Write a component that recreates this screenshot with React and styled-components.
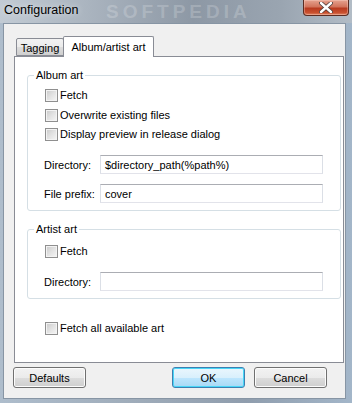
import React from "react";
import styled, { createGlobalStyle } from "styled-components";

const GlobalStyle = createGlobalStyle`
  html, body {
    margin: 0;
    padding: 0;
    background: #ffffff;
  }
  * {
    box-sizing: border-box;
  }
`;

const ui = `"Liberation Sans", Arial, sans-serif`;

const Window = styled.div`
  width: 352px;
  height: 403px;
  display: flex;
  flex-direction: column;
  background: linear-gradient(90deg, #aebdcc 0%, #9eabb9 40%, #8f9dad 70%, #a3b6c9 100%);
  font-family: ${ui};
  font-size: 11px;
  color: #000;
  overflow: hidden;
`;

const TitleBar = styled.div`
  height: 23px;
  flex: none;
  display: flex;
  align-items: flex-start;
  justify-content: space-between;
  position: relative;
  background: linear-gradient(90deg, #c2cbd4 0%, #aab4bf 25%, #8d98a5 55%, #9aa5b1 80%, #b2bcc6 100%);
`;

const Title = styled.span`
  font-size: 12.5px;
  padding: 3px 0 0 4px;
  color: #000;
  text-shadow: 0 0 6px rgba(255, 255, 255, 0.7);
`;

// faint site watermark that sits over the glass title bar
const Watermark = styled.span`
  position: absolute;
  left: 106px;
  top: 2px;
  font-family: ${ui};
  font-weight: bold;
  font-size: 19px;
  line-height: 20px;
  letter-spacing: 4px;
  color: rgba(255, 255, 255, 0.2);
  pointer-events: none;
  white-space: nowrap;
`;

const CloseButton = styled.div`
  width: 46px;
  height: 16px;
  margin-right: 3px;
  border: 1px solid #5b2c22;
  border-top: none;
  border-radius: 0 0 4px 4px;
  background: linear-gradient(180deg, #e5a290 0%, #d2745c 45%, #b83a20 55%, #c9512f 85%, #e08a6c 100%);
  box-shadow: inset 0 0 0 1px rgba(255, 220, 210, 0.35);
  display: flex;
  align-items: center;
  justify-content: center;
`;

const Client = styled.div`
  flex: 1;
  margin: 0 6px 4px 3px;
  background: #f0f0f0;
  border: 1px solid #8795a4;
  display: flex;
  flex-direction: column;
  padding: 12px 1px 0 10px;
`;

const TabStrip = styled.div`
  height: 20px;
  display: flex;
  align-items: flex-end;
  padding-left: 2px;
  position: relative;
  z-index: 1;
`;

const Tab = styled.div`
  height: ${(p) => (p.active ? 21 : 18)}px;
  margin-bottom: ${(p) => (p.active ? -1 : 0)}px;
  margin-left: ${(p) => (p.active ? -1 : 0)}px;
  width: ${(p) => p.w}px;
  border: 1px solid #898c95;
  border-bottom: ${(p) => (p.active ? "none" : "1px solid #898c95")};
  background: ${(p) =>
    p.active ? "#ffffff" : "linear-gradient(180deg, #f2f2f2 0%, #ebebeb 50%, #dddddd 51%, #cfcfcf 100%)"};
  border-radius: 2px 2px 0 0;
  display: flex;
  align-items: center;
  justify-content: center;
  padding-top: ${(p) => (p.active ? 0 : 1)}px;
`;

const Panel = styled.div`
  height: 307px;
  background: #ffffff;
  border: 1px solid #898c95;
  padding: 11px 2px 0 12px;
  display: flex;
  flex-direction: column;
`;

const Group = styled.fieldset`
  margin: ${(p) => p.mt || 0}px 0 0 0;
  padding: ${(p) => p.pt}px 17px 7px 17px;
  border: 1px solid #d5dfe5;
  border-radius: 3px;
  display: flex;
  flex-direction: column;
  min-width: 0;
`;

const Legend = styled.legend`
  padding: 0 2px;
  margin-left: -11px;
  line-height: 14px;
  font-size: 11px;
`;

const CheckRow = styled.label`
  display: flex;
  align-items: center;
  gap: 2px;
  height: 13px;
  margin-top: ${(p) => p.mt || 0}px;
  margin-left: ${(p) => p.ml || 0}px;
  line-height: 13px;
`;

const CheckBox = styled.span`
  width: 13px;
  height: 13px;
  flex: none;
  border: 1px solid #8f8f8f;
  background: linear-gradient(135deg, #c9c9c9 0%, #e2e2e2 50%, #f6f6f6 100%);
  box-shadow: inset 0 0 0 1px #f3f3f3;
`;

const FieldRow = styled.div`
  display: grid;
  grid-template-columns: 55px 1fr;
  align-items: center;
  margin-top: ${(p) => p.mt}px;
`;

const FieldLabel = styled.span`
  margin-left: -1px;
`;

const TextBox = styled.div`
  height: 19px;
  border: 1px solid #e2e3ea;
  border-top-color: #abadb3;
  border-left-color: #dbdfe6;
  border-right-color: #dbdfe6;
  background: #fff;
  padding: 0 4px;
  display: flex;
  align-items: center;
  white-space: nowrap;
  overflow: hidden;
`;

const ButtonRow = styled.div`
  display: flex;
  align-items: center;
  margin: 4px 17px 0 -1px;
`;

const Button = styled.button`
  width: 73px;
  height: 21px;
  margin-left: ${(p) => p.ml || 0}px;
  font-family: ${ui};
  font-size: 11px;
  color: #000;
  padding: 0;
  border-radius: 3px;
  border: 1px solid ${(p) => (p.primary ? "#3c7fb1" : "#707070")};
  background: ${(p) =>
    p.primary
      ? "linear-gradient(180deg, #eaf6fd 0%, #d9f0fc 50%, #bee6fd 51%, #a7d9f5 100%)"
      : "linear-gradient(180deg, #f2f2f2 0%, #ebebeb 50%, #dddddd 51%, #cfcfcf 100%)"};
  box-shadow: inset 0 0 0 1px ${(p) => (p.primary ? "#48d6f7" : "#fcfcfc")};
`;

const Spacer = styled.div`
  flex: 1;
`;

function Check({ label, mt, ml }) {
  return (
    <CheckRow mt={mt} ml={ml}>
      <CheckBox />
      <span>{label}</span>
    </CheckRow>
  );
}

function Field({ label, value, mt }) {
  return (
    <FieldRow mt={mt}>
      <FieldLabel>{label}</FieldLabel>
      <TextBox>{value}</TextBox>
    </FieldRow>
  );
}

export default function App() {
  return (
    <>
      <GlobalStyle />
      <Window>
        <TitleBar>
          <Title>Configuration</Title>
          <Watermark>SOFTPEDIA</Watermark>
          <CloseButton>
            <svg width="14" height="11" viewBox="0 0 14 11">
              <path
                d="M2 1 L12 10 M12 1 L2 10"
                stroke="#4a3a38"
                strokeWidth="4"
                strokeLinecap="round"
              />
              <path
                d="M2 1 L12 10 M12 1 L2 10"
                stroke="#ffffff"
                strokeWidth="2.4"
                strokeLinecap="round"
              />
            </svg>
          </CloseButton>
        </TitleBar>
        <Client>
          <TabStrip>
            <Tab w={48}>Tagging</Tab>
            <Tab w={91} active>
              Album/artist art
            </Tab>
          </TabStrip>
          <Panel>
            <Group pt={7}>
              <Legend>Album art</Legend>
              <Check label="Fetch" />
              <Check label="Overwrite existing files" mt={7} />
              <Check label="Display preview in release dialog" mt={6} />
              <Field label="Directory:" value="$directory_path(%path%)" mt={14} />
              <Field label="File prefix:" value="cover" mt={10} />
            </Group>
            <Group pt={9} mt={11}>
              <Legend>Artist art</Legend>
              <Check label="Fetch" />
              <Field label="Directory:" value="" mt={14} />
            </Group>
            <Check label="Fetch all available art" mt={23} ml={18} />
          </Panel>
          <ButtonRow>
            <Button>Defaults</Button>
            <Spacer />
            <Button primary>OK</Button>
            <Button ml={9}>Cancel</Button>
          </ButtonRow>
        </Client>
      </Window>
    </>
  );
}
